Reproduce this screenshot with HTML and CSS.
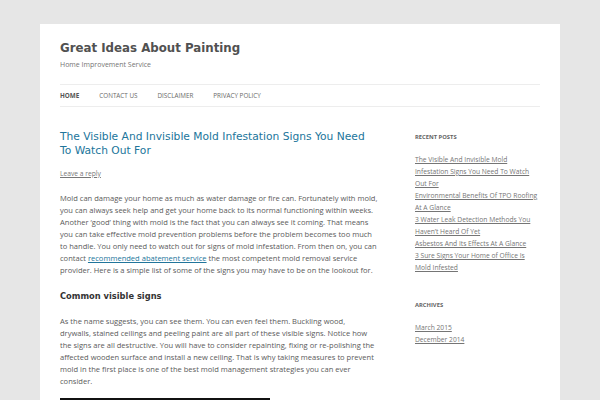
FILE: index.html
```html
<!DOCTYPE html>
<html>
<head>
    <meta charset="utf-8">
    <link rel="stylesheet" href="styles.css">
    <title>Great Ideas About Painting</title>
</head>
<body>
    <div class="site">
        <header class="site-header">
            <h1 class="site-title">Great Ideas About Painting</h1>
            <p class="site-description">Home Improvement Service</p>
            <nav class="main-nav">
                <a class="current" href="#">Home</a>
                <a href="#">Contact Us</a>
                <a href="#">Disclaimer</a>
                <a href="#">Privacy Policy</a>
            </nav>
        </header>

        <div class="main">
            <div class="content">
                <h1 class="entry-title"><a href="#">The Visible And Invisible Mold Infestation Signs You Need To Watch Out For</a></h1>
                <div class="comments-link"><a href="#">Leave a reply</a></div>

                <div class="entry-content">
                    <p>Mold can damage your home as much as water damage or fire can. Fortunately with mold,<br>
                    you can always seek help and get your home back to its normal functioning within weeks.<br>
                    Another &lsquo;good&rsquo; thing with mold is the fact that you can always see it coming. That means<br>
                    you can take effective mold prevention problems before the problem becomes too much<br>
                    to handle. You only need to watch out for signs of mold infestation. From then on, you can<br>
                    contact <a href="#">recommended abatement service</a> the most competent mold removal service<br>
                    provider. Here is a simple list of some of the signs you may have to be on the lookout for.</p>
                    <h2>Common visible signs</h2>
                    <p>As the name suggests, you can see them. You can even feel them. Buckling wood,<br>
                    drywalls, stained ceilings and peeling paint are all part of these visible signs. Notice how<br>
                    the signs are all destructive. You will have to consider repainting, fixing or re-polishing the<br>
                    affected wooden surface and install a new ceiling. That is why taking measures to prevent<br>
                    mold in the first place is one of the best mold management strategies you can ever<br>
                    consider.</p>
                    <div class="figure"></div>
                </div>
            </div>

            <div class="sidebar">
                <h3 class="widget-title">Recent Posts</h3>
                <ul>
                    <li><a href="#">The Visible And Invisible Mold Infestation Signs You Need To Watch Out For</a></li>
                    <li><a href="#">Environmental Benefits Of TPO Roofing At A Glance</a></li>
                    <li><a href="#">3 Water Leak Detection Methods You Haven&rsquo;t Heard Of Yet</a></li>
                    <li><a href="#">Asbestos And Its Effects At A Glance</a></li>
                    <li><a href="#">3 Sure Signs Your Home of Office Is Mold Infested</a></li>
                </ul>

                <h3 class="widget-title archives">Archives</h3>
                <ul>
                    <li><a href="#">March 2015</a></li>
                    <li><a href="#">December 2014</a></li>
                </ul>
            </div>
        </div>
    </div>
</body>
</html>
```

FILE: styles.css
```css
body{
    margin: 0;
    background-color: #e6e6e6;
    font-family: "Open Sans", "Liberation Sans", sans-serif;
    color: #444;
}

.site{
    width: 480px;
    margin: 24px auto 0;
    padding: 0 20px;
    background-color: #fff;
    min-height: 376px;
}

.site-header{
    padding-top: 16px;
}

.site-title{
    margin: 0;
    font-family: "DejaVu Sans", sans-serif;
    font-size: 11.8px;
    line-height: 16px;
    font-weight: bold;
    color: #515151;
}

.site-description{
    margin: 3px 0 0;
    font-size: 7px;
    line-height: 12px;
    color: #757575;
}

.main-nav{
    margin-top: 13px;
    border-top: 1px solid #ededed;
    border-bottom: 1px solid #ededed;
    height: 21px;
    line-height: 21px;
    display: flex;
    gap: 20px;
}

.main-nav a{
    font-size: 6.3px;
    text-transform: uppercase;
    text-decoration: none;
    color: #6a6a6a;
}

.main-nav a.current{
    font-weight: bold;
    color: #555;
}

.main{
    display: flex;
    gap: 42px;
}

.content{
    width: 313px;
    padding-top: 23px;
}

.entry-title{
    margin: 0;
    font-family: "DejaVu Sans", sans-serif;
    font-weight: normal;
    font-size: 10.7px;
    line-height: 14px;
}

.entry-title a{
    color: #21759b;
    text-decoration: none;
}

.comments-link{
    margin-top: 10px;
    font-size: 6.7px;
    line-height: 12px;
}

.comments-link a{
    color: #777;
}

.entry-content p{
    margin: 12px 0 0;
    font-size: 7.55px;
    line-height: 12px;
    color: #5a5a5a;
    white-space: nowrap;
}

.entry-content a{
    color: #21759b;
}

.entry-content h2{
    margin: 13px 0 0;
    font-family: "DejaVu Sans", sans-serif;
    font-size: 8.3px;
    line-height: 14px;
    color: #333;
}

.figure{
    margin-top: 11px;
    width: 210px;
    border-top: 2px solid #111;
}

.sidebar{
    width: 123px;
    padding-top: 24px;
}

.widget-title{
    margin: 0;
    font-size: 5.8px;
    line-height: 12px;
    text-transform: uppercase;
    color: #636363;
}

.widget-title.archives{
    margin-top: 25px;
}

.sidebar ul{
    list-style: none;
    margin: 11px 0 0;
    padding: 0;
}

.sidebar li{
    font-size: 6.7px;
    line-height: 12px;
}

.sidebar li a{
    color: #757575;
}
```
